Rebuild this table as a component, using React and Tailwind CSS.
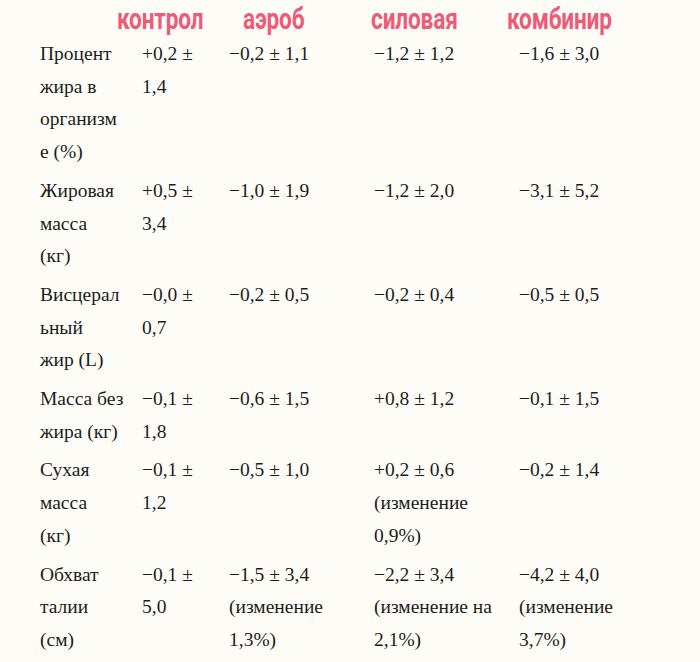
import React from "react";

const rows = [
  [["Процент", "жира в", "организм", "е (%)"], ["+0,2 ±", "1,4"], ["−0,2 ± 1,1"], ["−1,2 ± 1,2"], ["−1,6 ± 3,0"]],
  [["Жировая", "масса", "(кг)"], ["+0,5 ±", "3,4"], ["−1,0 ± 1,9"], ["−1,2 ± 2,0"], ["−3,1 ± 5,2"]],
  [["Висцерал", "ьный", "жир (L)"], ["−0,0 ±", "0,7"], ["−0,2 ± 0,5"], ["−0,2 ± 0,4"], ["−0,5 ± 0,5"]],
  [["Масса без", "жира (кг)"], ["−0,1 ±", "1,8"], ["−0,6 ± 1,5"], ["+0,8 ± 1,2"], ["−0,1 ± 1,5"]],
  [["Сухая", "масса", "(кг)"], ["−0,1 ±", "1,2"], ["−0,5 ± 1,0"], ["+0,2 ± 0,6", "(изменение", "0,9%)"], ["−0,2 ± 1,4"]],
  [["Обхват", "талии", "(см)"], ["−0,1 ±", "5,0"], ["−1,5 ± 3,4", "(изменение", "1,3%)"], ["−2,2 ± 3,4", "(изменение на", "2,1%)"], ["−4,2 ± 4,0", "(изменение", "3,7%)"]],
];

const headers = [
  { t: "контрол", w: "w-[126px]" },
  { t: "аэроб", w: "w-[128px]" },
  { t: "силовая", w: "w-[136px]" },
  { t: "комбинир", w: "w-[140px]" },
];

function Cell({ lines }) {
  return (
    <div className="pb-[6px]">
      {lines.map((l, i) => (
        <div key={i} className="whitespace-nowrap">{l}</div>
      ))}
    </div>
  );
}

export default function App() {
  return (
    <div className="w-[700px] h-[662px] overflow-hidden bg-[#fdfcf6]">
      <div className="flex h-[38px] pl-[117px] pt-[1px]">
        {headers.map((h, i) => (
          <div key={i} className={h.w + " relative"}>
            <span
              className="inline-block origin-left scale-x-[0.78] text-[29px] leading-[36px] font-bold text-[#ef5a78] tracking-[-0.2px]"
              style={{ fontFamily: '"Roboto", "DejaVu Sans", sans-serif' }}
            >
              {h.t}
            </span>
          </div>
        ))}
      </div>
      <div
        className="grid grid-cols-[102px_87px_145px_145px_145px] pl-[40px] text-[19.5px] leading-[32.7px] text-[#1c1c1c]"
        style={{ fontFamily: '"Liberation Serif", "DejaVu Serif", serif' }}
      >
        {rows.map((r, ri) => (
          <React.Fragment key={ri}>
            {r.map((c, ci) => (
              <Cell key={ci} lines={c} />
            ))}
          </React.Fragment>
        ))}
      </div>
    </div>
  );
}
